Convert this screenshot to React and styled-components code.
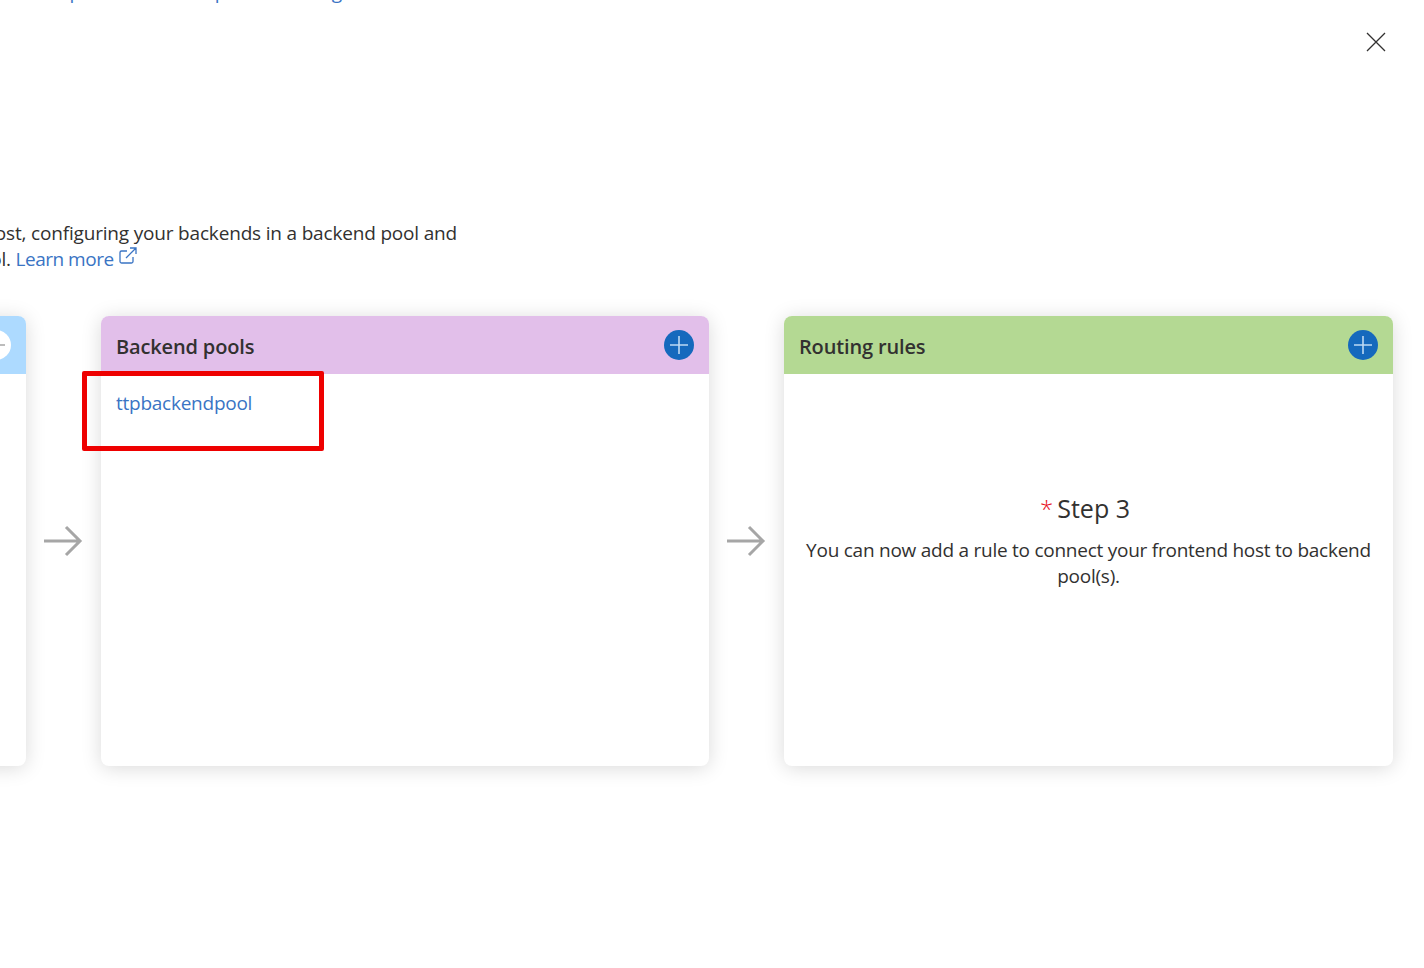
import React from "react";
import styled, { createGlobalStyle } from "styled-components";

const GlobalStyle = createGlobalStyle`
	html, body {
		margin: 0;
		background: #fff;
		overflow: hidden;
	}
	body {
		font-family: "Open Sans", "Noto Sans", sans-serif;
		color: #323130;
	}
`;

const Page = styled.div`
	width: 1424px;
	height: 968px;
	position: relative;
	overflow: hidden;
`;

const Crumbs = styled.div`
	margin: -21px 0 0 56px;
	height: 241px;
	font-size: 19px;
	line-height: 26px;
	letter-spacing: -0.4px;
	color: #3a74c4;
	white-space: nowrap;
`;

const CloseButton = styled.button`
	position: absolute;
	top: 31px;
	right: 37px;
	width: 22px;
	height: 22px;
	padding: 0;
	border: 0;
	background: none;
	color: #323130;
`;

const Description = styled.div`
	font-size: 19px;
	line-height: 26px;
	letter-spacing: -0.18px;
`;

const DescLine = styled.div`
	width: ${(props) => props.$end + 583}px;
	margin-left: -583px;
	text-align: right;
	white-space: nowrap;
`;

const LearnLink = styled.a`
	color: #3a74c4;
	text-decoration: none;
	letter-spacing: -0.5px;
`;

const Board = styled.div`
	display: flex;
	margin: 44px 0 0 -583px;
`;

const Card = styled.section`
	flex: none;
	width: ${(props) => props.$width}px;
	height: 450px;
	display: flex;
	flex-direction: column;
	background: #fff;
	border-radius: 8px;
	box-shadow: 0 2px 20px rgba(0, 0, 0, 0.15);
`;

const CardHead = styled.header`
	flex: none;
	height: 58px;
	box-sizing: border-box;
	padding: 0 15px;
	display: flex;
	align-items: center;
	justify-content: space-between;
	background: ${(props) => props.$color};
	border-radius: 8px 8px 0 0;
`;

const CardTitle = styled.h2`
	margin: 2px 0 0;
	font-size: 20px;
	font-weight: 600;
	letter-spacing: -0.15px;
	color: #323130;
`;

const AddButton = styled.button`
	flex: none;
	width: 30px;
	height: 30px;
	margin-top: -1px;
	padding: 0;
	border: 0;
	border-radius: 50%;
	background: ${(props) => (props.$muted ? "#fff" : "#1569bd")};
	color: ${(props) => (props.$muted ? "#a6a6a6" : "#bcd9f3")};
	display: flex;
	align-items: center;
	justify-content: center;
`;

const CardBody = styled.div`
	flex: 1;
	padding: 15px;
	font-size: 19px;
	line-height: 28px;
	letter-spacing: -0.25px;
`;

const PoolLink = styled.a`
	color: #3a74c4;
	text-decoration: none;
`;

const EmptyBody = styled.div`
	flex: 1;
	padding: 116px 15px 0;
	text-align: center;
	font-size: 19px;
	line-height: 26px;
	letter-spacing: -0.25px;
`;

const StepTitle = styled.div`
	font-size: 25px;
	line-height: 36px;
	margin-bottom: 10px;
	padding-right: 7px;
	letter-spacing: 0;
`;

const Required = styled.span`
	color: #e81123;
	margin-right: 4px;
	font-size: 24px;
	font-weight: 300;
`;

const Connector = styled.div`
	flex: none;
	width: 75px;
	box-sizing: border-box;
	padding-right: 2px;
	display: flex;
	align-items: center;
	justify-content: center;
	color: #a6a6a6;
`;

const Highlight = styled.div`
	position: absolute;
	left: 82px;
	top: 371px;
	width: 242px;
	height: 80px;
	box-sizing: border-box;
	border: 5px solid #ee0000;
	border-radius: 2px;
`;

const PlusIcon = () => (
	<svg width="22" height="22" viewBox="0 0 22 22" fill="none" stroke="currentColor" strokeWidth="1.6">
		<path d="M11 2v18M2 11h18" />
	</svg>
);

const ArrowIcon = () => (
	<svg width="40" height="32" viewBox="0 0 40 32" fill="none" stroke="currentColor" strokeWidth="3">
		<path d="M1 16h36M23 2l14 14-14 14" />
	</svg>
);

const App = () => {
	return (
		<Page>
			<GlobalStyle />
			<Crumbs>Update a backend pool or routing</Crumbs>
			<CloseButton aria-label="Close">
				<svg width="22" height="22" viewBox="0 0 22 22" fill="none" stroke="currentColor" strokeWidth="1.3">
					<path d="M2 2l18 18M20 2L2 20" />
				</svg>
			</CloseButton>
			<Description>
				<DescLine $end={457}>Set up your gateway by adding a frontend host, configuring your backends in a backend pool and</DescLine>
				<DescLine $end={138}>
					connecting the two with a routing rule for each pool.{" "}
					<LearnLink href="#">
						Learn more{" "}
						<svg width="20" height="20" viewBox="0 0 20 20" fill="none" stroke="currentColor" strokeWidth="1.3">
							<path d="M9 5H3.500A1.500 1.500 0 0 0 2 6.500v9A1.500 1.500 0 0 0 3.500 17h10a1.500 1.500 0 0 0 1.500-1.500V11M8 12L18 2M12 2h6v6" />
						</svg>
					</LearnLink>
				</DescLine>
			</Description>
			<Board>
				<Card $width={609}>
					<CardHead $color="#addaff">
						<CardTitle>Frontends</CardTitle>
						<AddButton $muted aria-label="Add frontend"><PlusIcon /></AddButton>
					</CardHead>
				</Card>
				<Connector><ArrowIcon /></Connector>
				<Card $width={608}>
					<CardHead $color="#e2bfea">
						<CardTitle>Backend pools</CardTitle>
						<AddButton aria-label="Add backend pool"><PlusIcon /></AddButton>
					</CardHead>
					<CardBody><PoolLink href="#">ttpbackendpool</PoolLink></CardBody>
				</Card>
				<Connector><ArrowIcon /></Connector>
				<Card $width={609}>
					<CardHead $color="#b4d993">
						<CardTitle>Routing rules</CardTitle>
						<AddButton aria-label="Add routing rule"><PlusIcon /></AddButton>
					</CardHead>
					<EmptyBody>
						<StepTitle><Required>*</Required>Step 3</StepTitle>
						You can now add a rule to connect your frontend host to backend pool(s).
					</EmptyBody>
				</Card>
			</Board>
			<Highlight />
		</Page>
	);
};

export default App;
